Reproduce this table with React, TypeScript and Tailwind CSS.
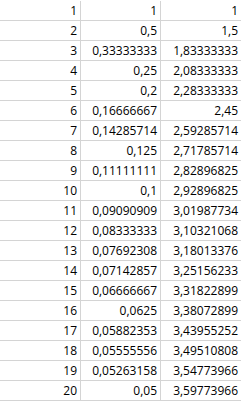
import React from 'react';

const rows: [string, string, string][] = [
  ['1', '1', '1'],
  ['2', '0,5', '1,5'],
  ['3', '0,33333333', '1,83333333'],
  ['4', '0,25', '2,08333333'],
  ['5', '0,2', '2,28333333'],
  ['6', '0,16666667', '2,45'],
  ['7', '0,14285714', '2,59285714'],
  ['8', '0,125', '2,71785714'],
  ['9', '0,11111111', '2,82896825'],
  ['10', '0,1', '2,92896825'],
  ['11', '0,09090909', '3,01987734'],
  ['12', '0,08333333', '3,10321068'],
  ['13', '0,07692308', '3,18013376'],
  ['14', '0,07142857', '3,25156233'],
  ['15', '0,06666667', '3,31822899'],
  ['16', '0,0625', '3,38072899'],
  ['17', '0,05882353', '3,43955252'],
  ['18', '0,05555556', '3,49510808'],
  ['19', '0,05263158', '3,54773966'],
  ['20', '0,05', '3,59773966'],
];

const App: React.FC = () => {
  return (
    <div
      className="w-[241px] h-[401px] bg-white pt-[1px] text-black text-[12px]"
      style={{ fontFamily: '"Open Sans", sans-serif' }}
    >
      {rows.map((r, i) => (
        <div key={i} className="flex h-[20px] border-b border-[#d4d4d4]">
          <div className="w-[81px] border-r border-[#d4d4d4] pr-[3px] pt-[1px] text-right leading-[18px]">{r[0]}</div>
          <div className="w-[80px] border-r border-[#d4d4d4] pr-[3px] pt-[1px] text-right leading-[18px]">{r[1]}</div>
          <div className="w-[80px] pr-[3px] pt-[1px] text-right leading-[18px]">{r[2]}</div>
        </div>
      ))}
    </div>
  );
};

export default App;
